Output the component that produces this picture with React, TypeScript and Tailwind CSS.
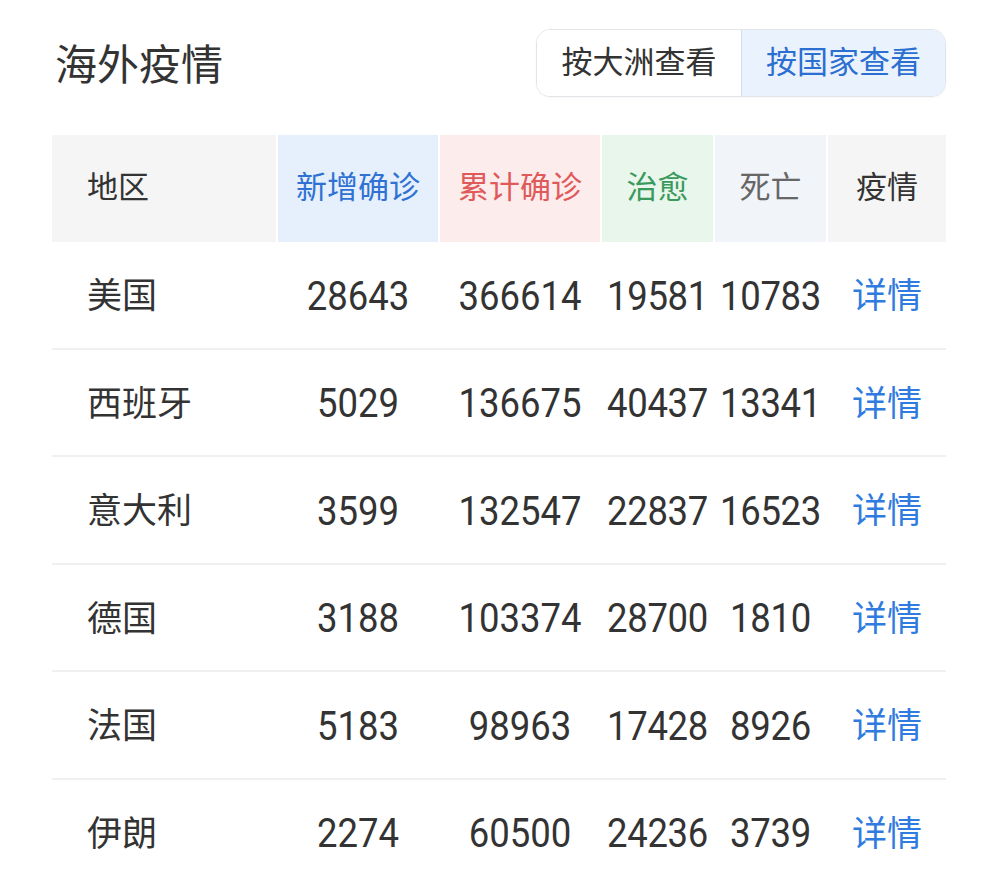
import React from "react";

const rows = [
  { name: "美国", add: "28643", total: "366614", cured: "19581", dead: "10783" },
  { name: "西班牙", add: "5029", total: "136675", cured: "40437", dead: "13341" },
  { name: "意大利", add: "3599", total: "132547", cured: "22837", dead: "16523" },
  { name: "德国", add: "3188", total: "103374", cured: "28700", dead: "1810" },
  { name: "法国", add: "5183", total: "98963", cured: "17428", dead: "8926" },
  { name: "伊朗", add: "2274", total: "60500", cured: "24236", dead: "3739" },
];

const cols = "grid grid-cols-[224px_160px_160px_111px_111px_118px] gap-x-[2px]";

export default function App() {
  return (
    <div
      className="w-[1000px] h-[885px] overflow-hidden bg-white text-[#333]"
      style={{ fontFamily: "Roboto, 'Noto Sans CJK SC', sans-serif" }}
    >
      <div className="pl-[52px] pr-[54px] pt-[29px]">
        <div className="flex items-center justify-between h-[68px]">
          <h1 className="pl-[3px] pt-[6px] text-[42px] leading-none font-normal text-[#333]">海外疫情</h1>
          <div className="flex h-[68px] rounded-[14px] border-[1.5px] border-[#e1e5ea] overflow-hidden text-[31px] shadow-[0_1px_2px_rgba(0,0,0,0.04)]">
            <div className="w-[204px] flex items-center justify-center bg-white text-[#333]">按大洲查看</div>
            <div className="w-[204px] flex items-center justify-center bg-[#eaf2fd] border-l-[1.5px] border-[#cfdff3] text-[#2b6fd1]">
              按国家查看
            </div>
          </div>
        </div>

        <div className={`${cols} mt-[38px] h-[107px] text-[31px]`}>
          <div className="bg-[#f5f5f5] flex items-center pl-[35px]">地区</div>
          <div className="bg-[#e6effc] flex items-center justify-center text-[#2f72d4]">新增确诊</div>
          <div className="bg-[#fdecec] flex items-center justify-center text-[#e05a5a]">累计确诊</div>
          <div className="bg-[#e8f6ec] flex items-center justify-center text-[#3a9a5c]">治愈</div>
          <div className="bg-[#f1f4f9] flex items-center justify-center text-[#666]">死亡</div>
          <div className="bg-[#f5f5f5] flex items-center justify-center text-[#333]">疫情</div>
        </div>

        {rows.map((r) => (
          <div key={r.name} className={`${cols} h-[107.5px] border-b-2 border-[#f0f0f0] items-center pt-[5px]`}>
            <div className="pl-[35px] text-[35px]">{r.name}</div>
            <div className="text-center text-[36.5px] scale-y-110">{r.add}</div>
            <div className="text-center text-[36.5px] scale-y-110">{r.total}</div>
            <div className="text-center text-[36.5px] scale-y-110 tracking-[-0.3px]">{r.cured}</div>
            <div className="text-center text-[36.5px] scale-y-110 tracking-[-0.3px]">{r.dead}</div>
            <div className="text-center text-[35px] text-[#2f7be0]">详情</div>
          </div>
        ))}
      </div>
    </div>
  );
}
